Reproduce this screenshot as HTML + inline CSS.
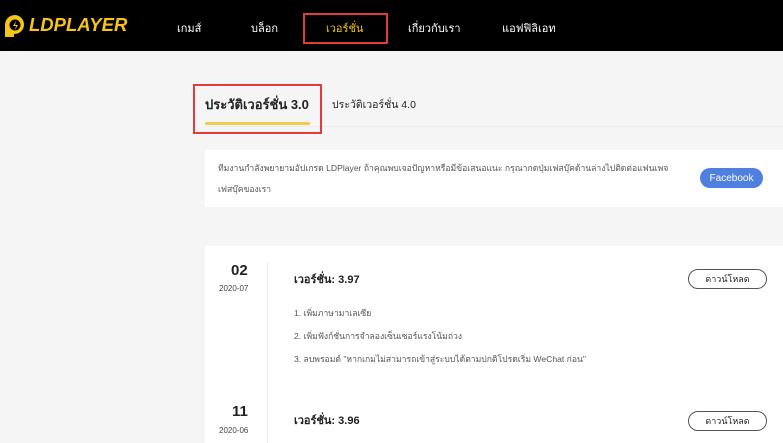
<!DOCTYPE html>
<html><head><meta charset="utf-8"><style>
*{margin:0;padding:0;box-sizing:border-box}
body{width:783px;height:443px;overflow:hidden;background:#f5f5f5;font-family:"Liberation Sans","Noto Sans CJK SC",sans-serif;position:relative;color:#222}
.a{position:absolute;white-space:nowrap}
.hdr{position:absolute;left:0;top:0;width:783px;height:51px;background:#000}
.nav{color:#fff;font-size:11px;top:19px}
.btn{position:absolute;border:1px solid #555;border-radius:11px;width:79px;height:20px;font-size:9px;text-align:center;line-height:18px;background:#fff}
</style></head><body>
<div class="hdr"></div>
<svg class="a" style="left:4px;top:14px" width="22" height="24" viewBox="0 0 22 24"><path d="M11 1a10 10 0 0 0-10 10v12h9v-3a9 9 0 0 0 1-19z" fill="#f5c518"/><circle cx="11" cy="11" r="5.5" fill="#000"/><path d="M12 7l-3 5h3l-1 4 3-5h-3z" fill="#f5c518"/></svg>
<div class="a" style="left:29px;top:14px;color:#f5c518;font-weight:bold;font-style:italic;font-size:18.5px">LDPLAYER</div>
<div class="a nav" style="left:177px">เกมส์</div>
<div class="a nav" style="left:251px">บล็อก</div>
<div class="a" style="left:303px;top:13px;width:85px;height:31px;border:2px solid #e03c3c"></div>
<div class="a nav" style="left:326px;color:#f5c518">เวอร์ชั่น</div>
<div class="a nav" style="left:408px">เกี่ยวกับเรา</div>
<div class="a nav" style="left:502px">แอฟฟิลิเอท</div>
<div class="a" style="left:205px;top:126px;width:578px;height:1px;background:#ececec"></div>
<div class="a" style="left:193px;top:84px;width:129px;height:50px;border:2px solid #e03c3c"></div>
<div class="a" style="left:205px;top:94px;font-size:13px;font-weight:bold">ประวัติเวอร์ชั่น 3.0</div>
<div class="a" style="left:205px;top:122px;width:105px;height:3px;background:#f2c94c;border-radius:2px"></div>
<div class="a" style="left:332px;top:96px;font-size:10.5px">ประวัติเวอร์ชั่น 4.0</div>
<div class="a" style="left:205px;top:150px;width:578px;height:57px;background:#fff"></div>
<div class="a" style="left:218px;top:161px;font-size:8.6px;color:#555">ทีมงานกำลังพยายามอัปเกรด LDPlayer ถ้าคุณพบเจอปัญหาหรือมีข้อเสนอแนะ กรุณากดปุ่มเฟสบุ๊คด้านล่างไปติดต่อแฟนเพจ</div>
<div class="a" style="left:218px;top:182px;font-size:8.6px;color:#555">เฟสบุ๊คของเรา</div>
<div class="a" style="left:700px;top:168px;width:63px;height:20px;border-radius:10px;background:#4f7fe0;color:#fff;font-size:10px;text-align:center;line-height:21px">Facebook</div>
<div class="a" style="left:205px;top:246px;width:578px;height:197px;background:#fff"></div>
<div class="a" style="left:267px;top:262px;width:1px;height:181px;background:#eee"></div>
<div class="a" style="left:231px;top:262px;font-size:15px;font-weight:bold">02</div>
<div class="a" style="left:219px;top:284px;font-size:8px;color:#444">2020-07</div>
<div class="a" style="left:294px;top:270px;font-size:11px;font-weight:bold">เวอร์ชั่น: 3.97</div>
<div class="btn" style="left:688px;top:269px">ดาวน์โหลด</div>
<div class="a" style="left:294px;top:306px;font-size:8.6px;color:#555">1. เพิ่มภาษามาเลเซีย</div>
<div class="a" style="left:294px;top:329px;font-size:8.6px;color:#555">2. เพิ่มฟังก์ชั่นการจำลองเซ็นเซอร์แรงโน้มถ่วง</div>
<div class="a" style="left:294px;top:352px;font-size:8.6px;color:#555">3. ลบพรอมต์ "หากเกมไม่สามารถเข้าสู่ระบบได้ตามปกติโปรดเริ่ม WeChat ก่อน"</div>
<div class="a" style="left:232px;top:403px;font-size:15px;font-weight:bold">11</div>
<div class="a" style="left:219px;top:426px;font-size:8px;color:#444">2020-06</div>
<div class="a" style="left:294px;top:411px;font-size:11px;font-weight:bold">เวอร์ชั่น: 3.96</div>
<div class="btn" style="left:688px;top:411px">ดาวน์โหลด</div>
</body></html>
